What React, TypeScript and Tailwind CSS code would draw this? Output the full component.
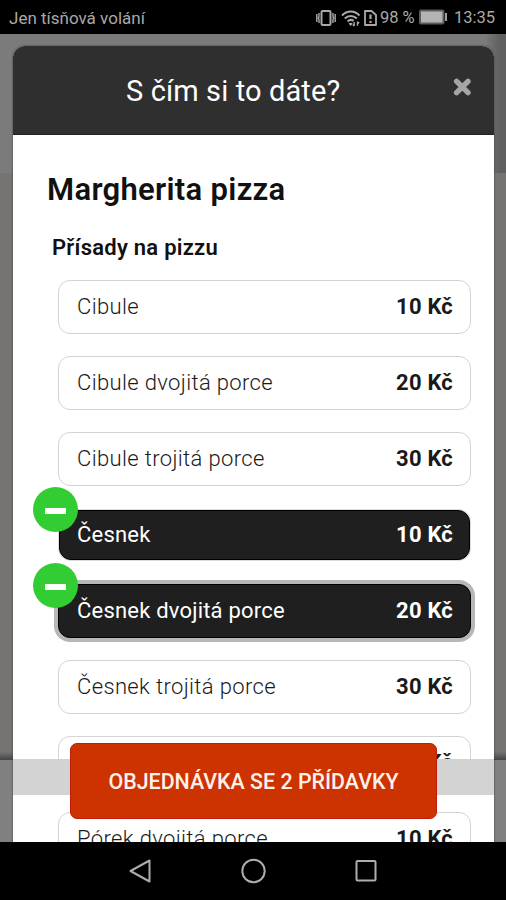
import React, { useState } from 'react';

type Topping = { id: number; name: string; price: string };

const TOPPINGS: Topping[] = [
  { id: 1, name: 'Cibule', price: '10 Kč' },
  { id: 2, name: 'Cibule dvojitá porce', price: '20 Kč' },
  { id: 3, name: 'Cibule trojitá porce', price: '30 Kč' },
  { id: 4, name: 'Česnek', price: '10 Kč' },
  { id: 5, name: 'Česnek dvojitá porce', price: '20 Kč' },
  { id: 6, name: 'Česnek trojitá porce', price: '30 Kč' },
  { id: 7, name: '', price: '5 Kč' },
  { id: 8, name: 'Pórek dvojitá porce', price: '10 Kč' },
];

const StatusBar = () => (
  <div className="flex h-[34px] shrink-0 items-center bg-black pl-[9px] pr-[11px] pt-[3px] text-[#a9a9a9]">
    <span className="text-[17px] leading-none">Jen tísňová volání</span>
    <div className="ml-auto flex items-center">
      {/* vibrate */}
      <svg className="-mt-[2px]" width="20" height="18" viewBox="0 0 20 18" fill="none" stroke="currentColor">
        <rect x="5.5" y="2" width="9" height="14" rx="1.2" strokeWidth="2" />
        <path d="M3 4v3.5l-.6 1.5.6 1.5V14M.8 5v8M17 4v3.5l.6 1.5-.6 1.5V14M19.2 5v8" strokeWidth="1.4" />
      </svg>
      {/* wifi */}
      <svg className="-mt-[2px] ml-[5px]" width="20" height="18" viewBox="0 0 20 18" fill="none" stroke="currentColor">
        <path d="M1 6.4C6 1.2 13.5 1.2 18.5 6.4M3.8 9.6c3.5-3.4 8.5-3.4 12 0M6.6 12.4c1.8-1.7 4.3-1.7 6-.5" strokeWidth="2.1" />
        <path d="M9.7 17l-2.2-2.4c1.2-1 3.2-1 4.2 0z" fill="currentColor" stroke="none" />
        <path d="M13.2 13v4m-1.5-1.4l1.5 1.4M16.5 16.8v-4m1.7 1.5l-1.7-1.5" strokeWidth="1.4" />
      </svg>
      {/* sim alert */}
      <svg className="-mt-[2px] ml-[3px]" width="14" height="18" viewBox="0 0 14 18" fill="none" stroke="currentColor">
        <path d="M1 2h6.5l4.5 4v10H1z" strokeWidth="1.8" strokeLinejoin="round" />
        <path d="M6.5 5.5V10M6.5 11.7v2.2" strokeWidth="2.2" />
      </svg>
      <span className="ml-[2px] w-[36px] whitespace-nowrap text-[16.5px] leading-none">98 %</span>
      {/* battery */}
      <svg className="-mt-[3px] ml-[3px]" width="28" height="16" viewBox="0 0 28 16">
        <rect x="0" y="0.5" width="25.5" height="15" rx="2" fill="#5c5c5c" />
        <rect x="2" y="2.5" width="21.5" height="11" fill="#b4b4b4" />
        <rect x="26" y="4" width="2" height="8" fill="#a0a0a0" />
      </svg>
      <span className="ml-[7px] text-[16.5px] leading-none">13:35</span>
    </div>
  </div>
);

const ToppingRow = ({ topping, selected, focused, onToggle }: { topping: Topping; selected: boolean; focused: boolean; onToggle: () => void }) => {
  const look = !selected
    ? 'h-[54px] w-full border border-[#d4d4d4] bg-white pl-[18px] pr-[17px] text-[#1a1a1a]'
    : focused
      ? 'h-[54px] w-full border border-black bg-[#1f1f1f] pl-[18px] pr-[17px] text-white shadow-[0_0_0_4px_#b5b8ba]'
      : 'mx-[1px] my-[2px] h-[50px] w-[411px] border border-black bg-[#1f1f1f] pl-[17px] pr-[16px] text-white shadow-[0_0_0_1px_#dcdcdc]';
  return (
    <div className="relative">
      <button
        onClick={onToggle}
        className={`flex items-center justify-between rounded-[12px] text-[22px] leading-none ${look}`}
      >
        <span className={selected ? 'tracking-[0.2px]' : 'font-light tracking-[0.36px]'}>{topping.name}</span>
        <span className="font-bold tracking-[0.2px]">{topping.price}</span>
      </button>
      {selected && (
        <span className="absolute -left-[25px] -top-[21px] flex h-[45px] w-[45px] items-center justify-center rounded-full bg-[#32cd32]">
          <span className="mt-[3px] h-[6px] w-[21px] bg-white" />
        </span>
      )}
    </div>
  );
};

const NavBar = () => (
  <div className="z-10 flex h-[58px] shrink-0 items-center justify-center gap-[88px] bg-black text-[#adadad]">
    <svg width="24" height="26" viewBox="0 0 24 26" fill="none" stroke="currentColor" strokeWidth="2" strokeLinejoin="round">
      <path d="M21.5 2.5v21L2.5 13z" />
    </svg>
    <svg width="26" height="26" viewBox="0 0 26 26" fill="none" stroke="currentColor" strokeWidth="2">
      <circle cx="13.5" cy="13" r="11.2" />
    </svg>
    <svg width="24" height="24" viewBox="0 0 24 24" fill="none" stroke="currentColor" strokeWidth="2">
      <rect x="2.5" y="2" width="19" height="19.5" rx="1" />
    </svg>
  </div>
);

export default function App() {
  const [picked, setPicked] = useState<number[]>([4, 5]);
  const [focusedId, setFocusedId] = useState(5);

  const toggle = (id: number) => {
    setFocusedId(id);
    setPicked((p) => (p.includes(id) ? p.filter((x) => x !== id) : [...p, id]));
  };

  return (
    <div className="flex h-[900px] w-[506px] flex-col overflow-hidden bg-black font-['Roboto',sans-serif]">
      <StatusBar />

      <div className="relative min-h-0 flex-1 overflow-hidden bg-[#757472]">
        {/* Dimmed page behind the dialog */}
        <div className="absolute inset-0 flex flex-col">
          <div className="h-[139px] bg-[linear-gradient(to_right,#7b7b7b_485px,#606060_500px,#606060)]" />
          <div className="h-[579px] bg-[#757472]" />
          <div className="h-[8px] bg-linear-to-b from-[#757472] to-[#454545]" />
          <div className="flex-1 bg-[#808080]" />
        </div>

        {/* Dialog */}
        <div className="relative ml-[13px] mt-[12px] w-[481px] overflow-hidden rounded-t-[12px] bg-white shadow-[0_0_2px_#333]">
          <div className="flex h-[89px] items-center border-b border-[#222] bg-[#2f2f2f]">
            <h1 className="ml-[113px] mt-[2px] text-[29px] leading-none tracking-[0.12px] text-white">S čím si to dáte?</h1>
            <button className="ml-auto mr-[23px] mt-[-6px] text-[#a5a5a5]">
              <svg width="18" height="18" viewBox="0 0 18 18" stroke="currentColor" strokeWidth="5.4" strokeLinecap="round">
                <path d="M3.6 3.3l11.4 11.4M15 3.3L3.6 14.7" />
              </svg>
            </button>
          </div>

          <div className="pl-[45px] pr-[23px]">
            <h2 className="-ml-[11px] pt-[39px] text-[31px] font-semibold leading-[32px] tracking-[0.3px] text-[#111]">Margherita pizza</h2>
            <h3 className="-ml-[6px] mt-[30px] text-[22px] font-semibold leading-[24px] tracking-[0.25px] text-[#111]">Přísady na pizzu</h3>
            <div className="mt-[20px] flex flex-col gap-[22px]">
              {TOPPINGS.map((t) => (
                <ToppingRow
                  key={t.id}
                  topping={t}
                  selected={picked.includes(t.id)}
                  focused={focusedId === t.id}
                  onToggle={() => toggle(t.id)}
                />
              ))}
            </div>
          </div>
        </div>

        {/* Floating order bar */}
        <div className="absolute left-[13px] top-[725px] h-[36px] w-[481px] bg-[#d3d3d3]" />
        <button className="absolute left-[70px] top-[709px] h-[76px] w-[367px] rounded-[7px] border border-[#c41a0c] bg-[#cc3300] pt-[2px] text-[21.4px] font-medium leading-none text-[#fff0ec]">
          OBJEDNÁVKA SE {picked.length} PŘÍDAVKY
        </button>
      </div>

      <NavBar />
    </div>
  );
}
